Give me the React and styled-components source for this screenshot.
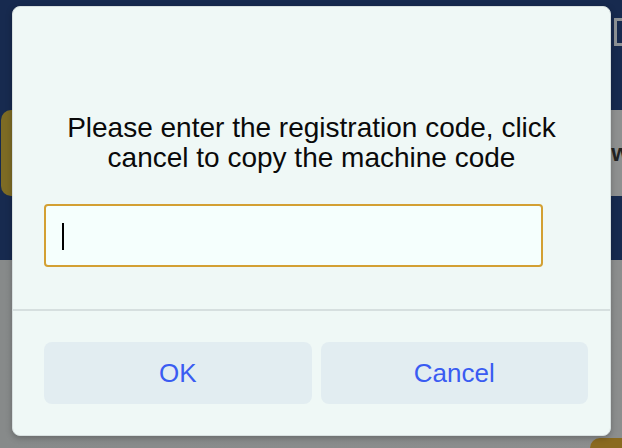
import styled, { createGlobalStyle } from "styled-components";

const Global = createGlobalStyle`
  html, body {
    margin: 0;
    padding: 0;
    width: 622px;
    height: 448px;
    overflow: hidden;
    font-family: "Liberation Sans", Arial, sans-serif;
  }
`;

const App = () => {
  return (
    <>
      <Global />
      <Page>
        <Header>
          <TopRow>
            <CornerBox />
          </TopRow>
          <MidRow>
            <YellowPill />
            <GreyStrip>
              <span>w</span>
            </GreyStrip>
          </MidRow>
        </Header>
        <Body>
          <GoldButton />
        </Body>
      </Page>

      <Dialog>
        <Content>
          <Message>
            Please enter the registration code, click
            <br />
            cancel to copy the machine code
          </Message>
          <InputWrap>
            <CodeInput />
            <Caret />
          </InputWrap>
        </Content>
        <Footer>
          <ActionButton>OK</ActionButton>
          <ActionButton>Cancel</ActionButton>
        </Footer>
      </Dialog>
    </>
  );
};

export default App;

const Page = styled.div`
  width: 622px;
  height: 448px;
  display: flex;
  flex-direction: column;
  background: #8a8c8c;
`;

const Header = styled.div`
  height: 260px;
  background: #172a4f;
  display: flex;
  flex-direction: column;
`;

const TopRow = styled.div`
  height: 110px;
  display: flex;
  justify-content: flex-end;
  padding-top: 18px;
  box-sizing: border-box;
`;

const CornerBox = styled.div`
  width: 14px;
  height: 28px;
  margin-right: -6px;
  border: 3px solid #8d9296;
  box-sizing: border-box;
`;

const MidRow = styled.div`
  display: flex;
  justify-content: space-between;
  height: 86px;
`;

const YellowPill = styled.div`
  width: 40px;
  margin-left: 1px;
  background: #7d6b24;
  border-radius: 10px;
`;

const GreyStrip = styled.div`
  width: 40px;
  background: #8e9090;
  display: flex;
  align-items: center;
  justify-content: flex-end;
  span {
    font-size: 24px;
    font-weight: bold;
    color: #222;
    margin-right: -8px;
  }
`;

const Body = styled.div`
  flex: 1;
  position: relative;
  background: linear-gradient(90deg, #878a8a 0%, #8c8e8e 100%);
`;

const GoldButton = styled.div`
  position: absolute;
  right: -20px;
  bottom: -20px;
  width: 52px;
  height: 30px;
  border-radius: 10px;
  background: #8a6a20;
`;

const Dialog = styled.div`
  position: absolute;
  left: 12px;
  top: 6px;
  width: 599px;
  height: 430px;
  box-sizing: border-box;
  background: #eff8f6;
  border: 1px solid #d8e0e0;
  border-radius: 8px;
  box-shadow: 0 2px 6px rgba(0, 0, 0, 0.25);
  display: flex;
  flex-direction: column;
`;

const Content = styled.div`
  height: 304px;
  box-sizing: border-box;
  padding: 106px 67px 0 31px;
  display: flex;
  flex-direction: column;
  border-bottom: 2px solid #d6dfdf;
`;

const Message = styled.div`
  font-size: 28px;
  line-height: 30px;
  color: #0a0a0a;
  text-align: center;
  white-space: nowrap;
  margin-left: 18px;
  margin-right: -18px;
  display: flex;
  flex-direction: column;
  align-items: center;
`;

const InputWrap = styled.div`
  position: relative;
  margin-top: 31px;
  display: flex;
`;

const CodeInput = styled.input`
  flex: 1;
  height: 63px;
  box-sizing: border-box;
  border: 2px solid #d3a033;
  border-radius: 4px;
  background: #f5fffd;
  padding: 0 16px;
  font-size: 26px;
  font-family: "Liberation Sans", Arial, sans-serif;
  color: #000;
  caret-color: transparent;
  outline: none;
`;

const Caret = styled.span`
  position: absolute;
  left: 18px;
  top: 19px;
  width: 2px;
  height: 27px;
  background: #000;
`;

const Footer = styled.div`
  display: grid;
  grid-template-columns: 1fr 1fr;
  gap: 9px;
  padding: 31px 22px 0 31px;
`;

const ActionButton = styled.button`
  height: 62px;
  border: none;
  border-radius: 8px;
  background: #e2edf1;
  color: #3a5cf2;
  font-size: 26px;
  font-family: "Liberation Sans", Arial, sans-serif;
`;
